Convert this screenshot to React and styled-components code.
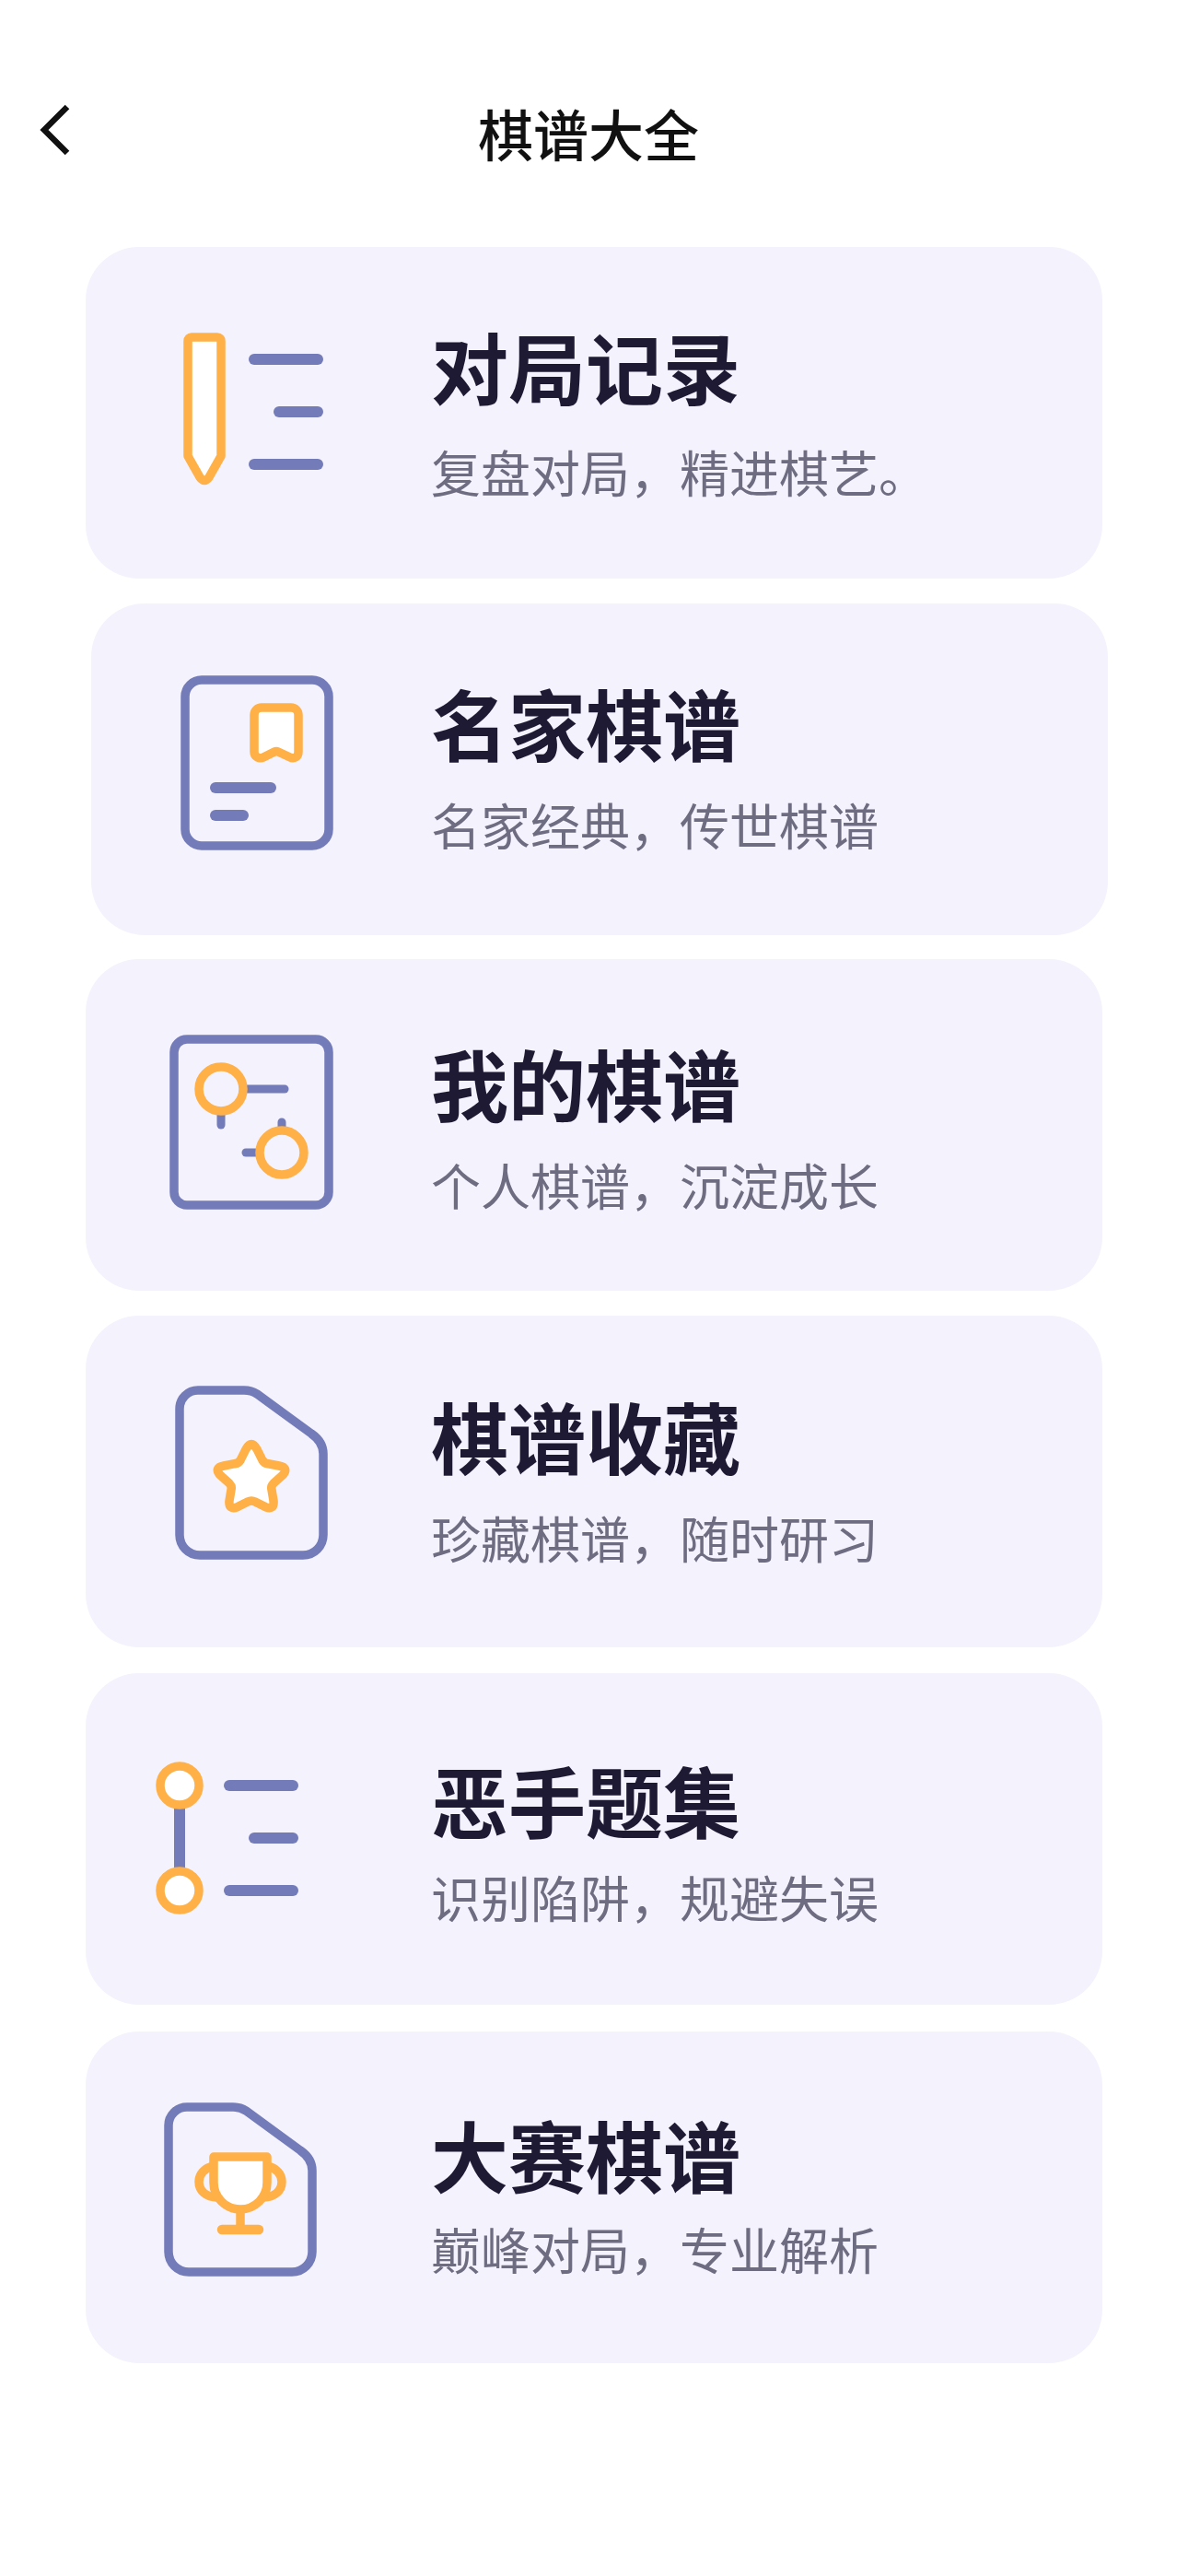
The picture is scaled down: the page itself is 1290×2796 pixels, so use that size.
import React from 'react';
import styled, { createGlobalStyle } from 'styled-components';

const BLUE = '#737bb9';
const ORANGE = '#ffb046';
const CARD_BG = '#f4f2fd';
const STROKE = 9.5;

const GlobalStyle = createGlobalStyle`
  body {
    margin: 0;
    background: #ffffff;
    font-family: "Noto Sans CJK SC", "Noto Sans", sans-serif;
  }
`;

const Page = styled.div`
  width: 1290px;
  min-height: 2796px;
  padding-top: 112px;
  box-sizing: border-box;
`;

const Header = styled.header`
  display: grid;
  grid-template-columns: 519px auto;
  height: 156px;
`;

const BackIcon = styled.svg`
  display: block;
  width: 519px;
  height: 60px;
`;

const HeaderTitle = styled.h1`
  margin: 0;
  font-size: 60px;
  line-height: 64px;
  font-weight: 500;
  color: #111111;
`;

const CardList = styled.main`
  display: flex;
  flex-direction: column;
  gap: 26.5px;
`;

const Card = styled.section`
  display: flex;
  align-items: flex-start;
  width: 1104px;
  height: 360px;
  margin-left: ${(p) => p.$left || 93}px;
  margin-top: ${(p) => p.$shift || 0}px;
  padding-left: ${(p) => 140 - (p.$left || 93)}px;
  box-sizing: border-box;
  border-radius: 58px;
  background: ${CARD_BG};
`;

const IconSvg = styled.svg`
  flex: none;
  display: block;
  width: 260px;
  height: 240px;
  margin-top: ${(p) => p.$top}px;
`;

const CardText = styled.div`
  margin-left: 68px;
  padding-top: ${(p) => p.$top}px;
`;

const CardTitle = styled.h2`
  margin: 0;
  font-size: 84px;
  line-height: 100px;
  font-weight: 700;
  color: #1e1a33;
`;

const CardDesc = styled.p`
  margin: ${(p) => p.$gap}px 0 0;
  font-size: 54px;
  line-height: 64px;
  font-weight: 400;
  color: #6e6c80;
`;

const Bar = ({ x1, x2, y, w = 12, color = BLUE }) => (
  <line x1={x1} x2={x2} y1={y} y2={y} stroke={color} strokeWidth={w} strokeLinecap="round" />
);

const docPath = 'M75 19 H125 Q133 19 139 23 L198 66 Q211 75 211 88 V176 A22 22 0 0 1 189 198 H77 A22 22 0 0 1 55 176 V39 A20 20 0 0 1 75 19 Z';

const PencilIcon = () => (
  <>
    <path
      d="M64 50 a4 4 0 0 1 4-4 H96 a4 4 0 0 1 4 4 V175 L87 198 Q82 205 77 198 L64 175 Z"
      fill="#fff"
      stroke={ORANGE}
      strokeWidth={STROKE}
      strokeLinejoin="round"
    />
    <Bar x1={136} x2={205} y={70} />
    <Bar x1={163} x2={205} y={127} />
    <Bar x1={136} x2={205} y={184} />
  </>
);

const BookmarkIcon = () => (
  <>
    <rect x="61" y="28" width="156" height="180" rx="18" fill="none" stroke={BLUE} strokeWidth={STROKE} />
    <path
      d="M136 66 a8 8 0 0 1 8-8 H176 a8 8 0 0 1 8 8 V106 c0 6 -5 8 -9 6 L162 106 Q160 105 158 106 L146 112 c-4 2 -10 0 -10 -6 Z"
      fill="#fff"
      stroke={ORANGE}
      strokeWidth={STROKE}
      strokeLinejoin="round"
    />
    <Bar x1={94} x2={154} y={145} />
    <Bar x1={94} x2={124} y={175} />
  </>
);

const NodesIcon = () => (
  <>
    <rect x="49" y="28" width="168" height="180" rx="14" fill="none" stroke={BLUE} strokeWidth={STROKE} />
    <Bar x1={100} x2={169} y={82} w={9} />
    <line x1="100" x2="100" y1="82" y2="121" stroke={BLUE} strokeWidth="9" strokeLinecap="round" />
    <line x1="166" x2="166" y1="151" y2="118" stroke={BLUE} strokeWidth="9" strokeLinecap="round" />
    <Bar x1={127} x2={166} y={151} w={9} />
    <circle cx="100" cy="82" r="24" fill={CARD_BG} stroke={ORANGE} strokeWidth={STROKE} />
    <circle cx="166" cy="151" r="24" fill={CARD_BG} stroke={ORANGE} strokeWidth={STROKE} />
  </>
);

const StarIcon = () => (
  <>
    <path d={docPath} fill="none" stroke={BLUE} strokeWidth={STROKE} />
    <path
      d="M127 83 Q133 72 139 83 L145 95 Q147 98 150 98.5 L163 101 Q174 103 167 111 L157 120 Q154 123 155 127 L157 139 Q158 149 149 146 L137 140 Q133 138 129 140 L117 146 Q108 149 109 139 L111 127 Q112 123 109 120 L99 111 Q92 103 103 101 L116 98.5 Q119 98 121 95 Z"
      fill="#fff"
      stroke={ORANGE}
      strokeWidth={STROKE}
      strokeLinejoin="round"
    />
  </>
);

const ChainIcon = () => (
  <>
    <line x1="55" x2="55" y1="58" y2="172" stroke={BLUE} strokeWidth="12" />
    <circle cx="55" cy="58" r="21" fill="#fff" stroke={ORANGE} strokeWidth={STROKE} />
    <circle cx="55" cy="172" r="21" fill="#fff" stroke={ORANGE} strokeWidth={STROKE} />
    <Bar x1={109} x2={178} y={58} />
    <Bar x1={136} x2={178} y={115} />
    <Bar x1={109} x2={178} y={172} />
  </>
);

const TrophyIcon = () => (
  <>
    <path d={docPath} transform="translate(-12 -3)" fill="none" stroke={BLUE} strokeWidth={STROKE} />
    <g fill="none" stroke={ORANGE} strokeWidth={STROKE} strokeLinecap="round" strokeLinejoin="round">
      <path d="M92 80 C82 82 76 89 76 97 C76 107 84 114 96 114" />
      <path d="M150 80 C160 82 166 89 166 97 C166 107 158 114 146 114" />
      <path d="M92 70 H150 V98 A29 29 0 0 1 92 98 Z" fill="#fff" />
      <path d="M121 130 V148" />
      <path d="M101 149 H141" strokeWidth="10.5" />
    </g>
  </>
);

const cards = [
  { title: '对局记录', desc: '复盘对局，精进棋艺。', Icon: PencilIcon, iconTop: 52, textTop: 79, gap: 33 },
  { title: '名家棋谱', desc: '名家经典，传世棋谱', Icon: BookmarkIcon, iconTop: 55.5, textTop: 79.5, left: 99, gap: 29 },
  { title: '我的棋谱', desc: '个人棋谱，沉淀成长', Icon: NodesIcon, iconTop: 59, textTop: 84, gap: 29 },
  { title: '棋谱收藏', desc: '珍藏棋谱，随时研习', Icon: StarIcon, iconTop: 62.5, textTop: 80.5, gap: 29 },
  { title: '恶手题集', desc: '识别陷阱，规避失误', Icon: ChainIcon, iconTop: 64.5, textTop: 87.5, gap: 24, shift: 1.5 },
  { title: '大赛棋谱', desc: '巅峰对局，专业解析', Icon: TrophyIcon, iconTop: 66.5, textTop: 83.5, gap: 21, shift: 2.5 },
];

export default function App() {
  return (
    <Page>
      <GlobalStyle />
      <Header>
        <BackIcon viewBox="0 0 519 60">
          <path d="M73 4 L48 29 L73 54" fill="none" stroke="#111" strokeWidth="6.5" />
        </BackIcon>
        <HeaderTitle>棋谱大全</HeaderTitle>
      </Header>
      <CardList>
        {cards.map(({ title, desc, Icon, iconTop, textTop, left, gap, shift }) => (
          <Card key={title} $left={left} $shift={shift}>
            <IconSvg viewBox="0 0 260 240" $top={iconTop}>
              <Icon />
            </IconSvg>
            <CardText $top={textTop}>
              <CardTitle>{title}</CardTitle>
              <CardDesc $gap={gap}>{desc}</CardDesc>
            </CardText>
          </Card>
        ))}
      </CardList>
    </Page>
  );
}
